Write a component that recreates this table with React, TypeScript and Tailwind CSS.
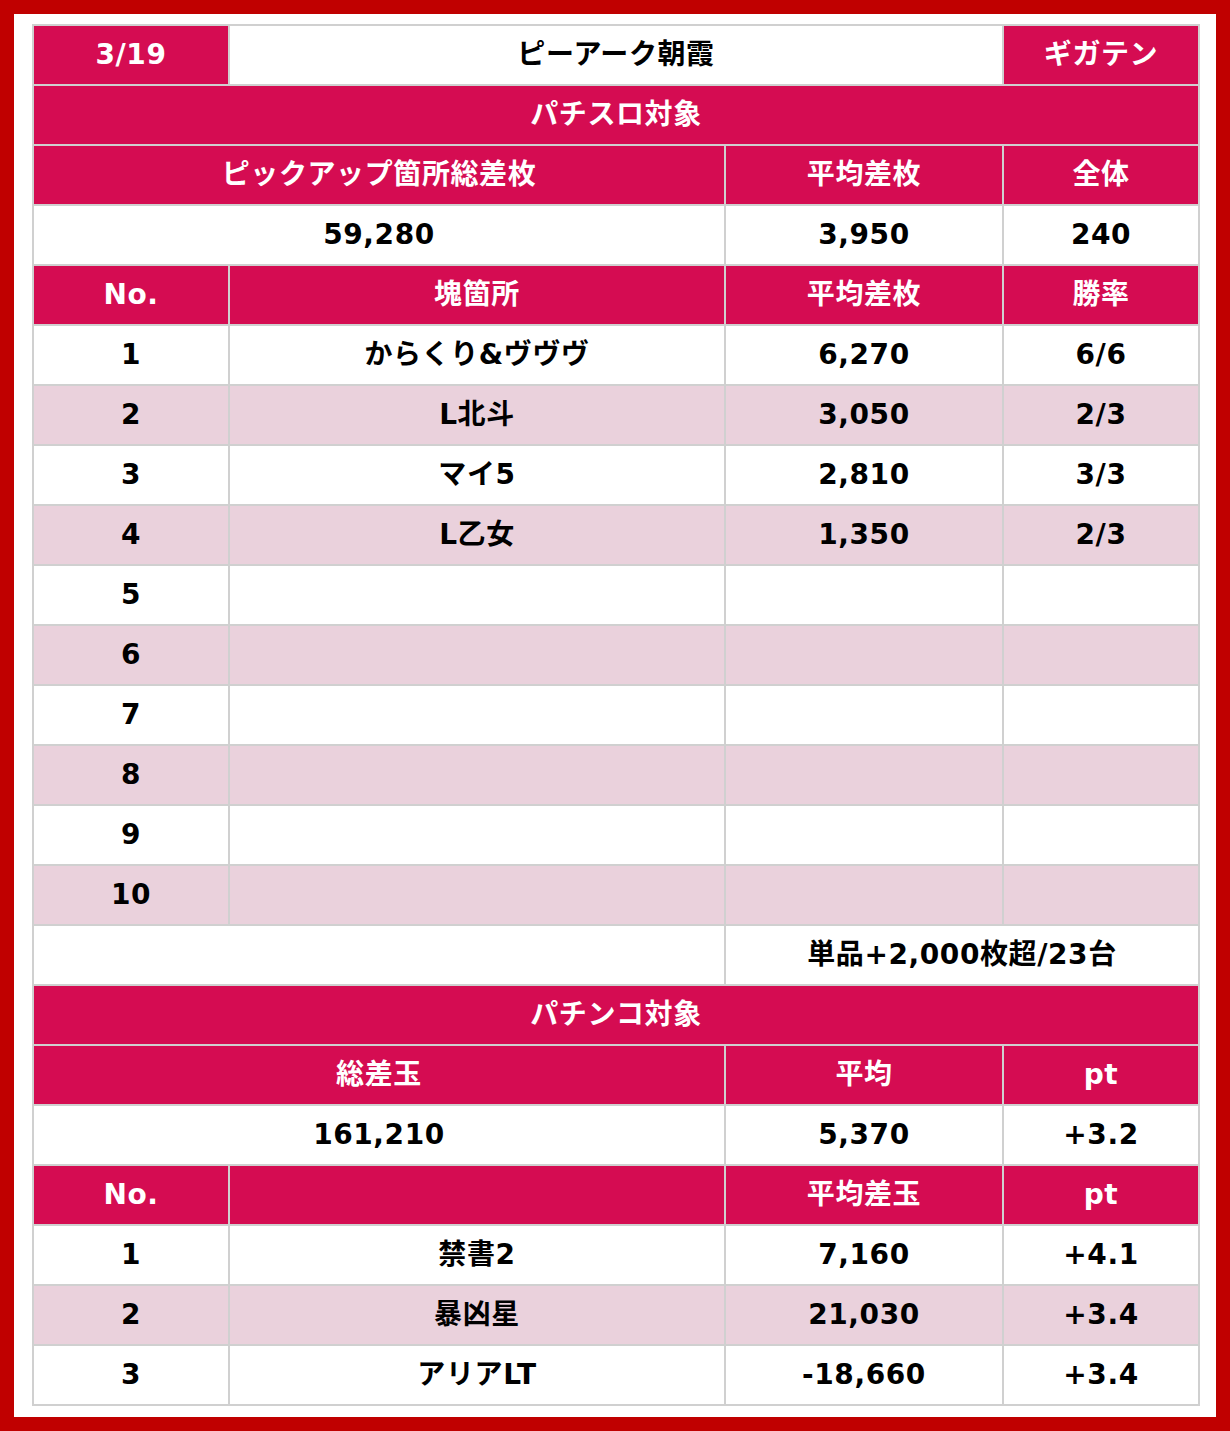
import React from "react";

type Cell = { text?: string; span?: number; head?: boolean };
type Row = { cells: Cell[]; pink?: boolean };

const H = (text: string, span = 1): Cell => ({ text, span, head: true });
const D = (text = "", span = 1): Cell => ({ text, span });

const spanClass: Record<number, string> = {
  1: "col-span-1",
  2: "col-span-2",
  3: "col-span-3",
  4: "col-span-4",
};

const slotRows: Row[] = [
  { cells: [D("1"), D("からくり&ヴヴヴ"), D("6,270"), D("6/6")] },
  { cells: [D("2"), D("L北斗"), D("3,050"), D("2/3")], pink: true },
  { cells: [D("3"), D("マイ5"), D("2,810"), D("3/3")] },
  { cells: [D("4"), D("L乙女"), D("1,350"), D("2/3")], pink: true },
  { cells: [D("5"), D(), D(), D()] },
  { cells: [D("6"), D(), D(), D()], pink: true },
  { cells: [D("7"), D(), D(), D()] },
  { cells: [D("8"), D(), D(), D()], pink: true },
  { cells: [D("9"), D(), D(), D()] },
  { cells: [D("10"), D(), D(), D()], pink: true },
];

const rows: Row[] = [
  { cells: [H("3/19"), D("ピーアーク朝霞", 2), H("ギガテン")] },
  { cells: [H("パチスロ対象", 4)] },
  { cells: [H("ピックアップ箇所総差枚", 2), H("平均差枚"), H("全体")] },
  { cells: [D("59,280", 2), D("3,950"), D("240")] },
  { cells: [H("No."), H("塊箇所"), H("平均差枚"), H("勝率")] },
  ...slotRows,
  { cells: [D("", 2), D("単品+2,000枚超/23台", 2)] },
  { cells: [H("パチンコ対象", 4)] },
  { cells: [H("総差玉", 2), H("平均"), H("pt")] },
  { cells: [D("161,210", 2), D("5,370"), D("+3.2")] },
  { cells: [H("No."), H(""), H("平均差玉"), H("pt")] },
  { cells: [D("1"), D("禁書2"), D("7,160"), D("+4.1")] },
  { cells: [D("2"), D("暴凶星"), D("21,030"), D("+3.4")], pink: true },
  { cells: [D("3"), D("アリアLT"), D("-18,660"), D("+3.4")] },
];

export default function App() {
  return (
    <div className="w-[1230px] h-[1431px] border-[14px] border-[#c00000] bg-white pt-[10px] pl-[18px] pr-[16px]">
      <div
        className="grid w-[1168px] grid-cols-[194px_494px_276px_194px] auto-rows-[58px] gap-[2px] bg-[#d0d0d0] p-[2px] font-bold text-[28px] tracking-[0.6px]"
        style={{ fontFamily: '"DejaVu Sans", "Noto Sans CJK JP", sans-serif' }}
      >
        {rows.map((row, ri) =>
          row.cells.map((c, ci) => (
            <div
              key={`${ri}-${ci}`}
              className={`${spanClass[c.span ?? 1]} flex items-center justify-center leading-none whitespace-nowrap ${
                c.head
                  ? "bg-[#d50c52] text-white"
                  : row.pink
                  ? "bg-[#ead1dc] text-black"
                  : "bg-white text-black"
              }`}
            >
              {c.text}
            </div>
          ))
        )}
      </div>
    </div>
  );
}
